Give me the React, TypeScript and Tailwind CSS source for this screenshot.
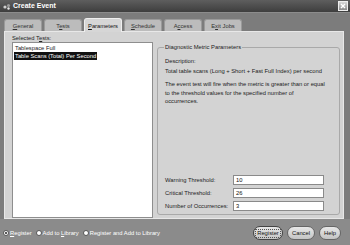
import { useState } from "react";

const tabs = [
  { label: "General", key: "G" },
  { label: "Tests", key: "e" },
  { label: "Parameters", key: "P" },
  { label: "Schedule", key: "S" },
  { label: "Access", key: "c" },
  { label: "Exit Jobs", key: "x" },
];

// underline the mnemonic letter like a swing dialog
const Mnemonic = ({ text, k }: { text: string; k: string }) => {
  const i = text.indexOf(k);
  if (i < 0) return <>{text}</>;
  return (
    <>
      {text.slice(0, i)}
      <span className="underline">{text[i]}</span>
      {text.slice(i + 1)}
    </>
  );
};

const Field = ({ label, value }: { label: string; value: string }) => (
  <div className="flex items-center h-[10px]">
    <div className="w-[68px] text-[#222] whitespace-nowrap">{label}</div>
    <div className="w-[91px] h-[10px] bg-white border border-[#8a8a8a] px-[2px] leading-[8px] text-[#111]">
      {value}
    </div>
  </div>
);

const Radio = ({ checked, children }: { checked?: boolean; children: React.ReactNode }) => (
  <div className="flex items-center gap-[1px]">
    <div className="size-[6px] rounded-full bg-white border border-[#555] flex items-center justify-center">
      {checked && <div className="size-[2px] rounded-full bg-[#222]" />}
    </div>
    <span className="text-white">{children}</span>
  </div>
);

export default function App() {
  const [tab, setTab] = useState(2);

  return (
    <div
      className="w-[350px] h-[245px] bg-[#7c7c7c] flex flex-col overflow-hidden text-[5.8px] leading-[8px]"
      style={{ fontFamily: '"Liberation Sans", Arial, sans-serif' }}
    >
      {/* Title bar */}
      <div className="h-[13px] bg-gradient-to-b from-[#5e5e5e] to-[#3e3e3e] border-b border-[#8c8c8c] flex items-center pl-[3px] pr-[2px]">
        <svg width="8" height="7" viewBox="0 0 8 7" className="mr-[2px]">
          <circle cx="2" cy="4" r="1.6" fill="#cfcfcf" />
          <circle cx="5.5" cy="2.5" r="1.6" fill="#9a9a9a" />
          <circle cx="5.5" cy="5.5" r="1.2" fill="#e5e5e5" />
        </svg>
        <span className="text-white font-bold text-[7px]">Create Event</span>
        <div className="ml-auto size-[10px] bg-gradient-to-b from-[#d8d8d8] to-[#8a8a8a] border border-[#eee] flex items-center justify-center">
          <svg width="6" height="6" viewBox="0 0 6 6">
            <path d="M1 1 L5 5 M5 1 L1 5" stroke="#fff" strokeWidth="1.4" />
          </svg>
        </div>
      </div>

      {/* Tabs */}
      <div className="flex items-end gap-[2px] pl-[4px] pt-[4px] h-[18px]">
        {tabs.map((t, i) => (
          <button
            key={t.label}
            onClick={() => setTab(i)}
            className={
              i === tab
                ? "w-[38px] h-[14px] bg-[#d6d6d6] border border-b-0 border-[#efefef] rounded-t-[3px] text-[#111] -mb-[1px] relative"
                : "w-[38px] h-[12px] bg-[#bcbcbc] border border-b-0 border-[#9a9a9a] rounded-t-[3px] text-[#333]"
            }
          >
            <Mnemonic text={t.label} k={t.key} />
          </button>
        ))}
      </div>

      {/* Panel */}
      <div className="ml-[4px] mr-[6px] h-[188px] bg-[#d3d3d3] border border-[#e8e8e8] flex gap-[4px] pl-[7px] pt-[2px]">
        {/* Selected tests */}
        <div className="w-[141px] flex flex-col">
          <div className="h-[8px] text-[#222]">
            Selected T<span className="underline">e</span>sts:
          </div>
          <div className="h-[176px] bg-white border border-[#8e8e8e] pt-[1px] pl-[1px]">
            <div className="text-[#222] pl-[1px]">Tablespace Full</div>
            <div className="inline-block bg-[#111] text-white px-[1px]">Table Scans (Total) Per Second</div>
          </div>
        </div>

        {/* Diagnostic params */}
        <fieldset className="mt-[9px] w-[183px] h-[172px] border border-[#a9a9a9] rounded-[3px] pl-[7px] pr-[4px] flex flex-col">
          <legend className="px-[1px] ml-[-1px] text-[#222]">Diagnostic Metric Parameters</legend>
          <div className="mt-[6px] text-[#222]">Description:</div>
          <div className="mt-[2px] text-[#222] whitespace-nowrap">Total table scans (Long + Short + Fast Full Index) per second</div>
          <div className="mt-[5px] text-[#222] leading-[8.5px] whitespace-nowrap">
            The event test will fire when the metric is greater than or equal
            <br />
            to the threshold values for the specified number of
            <br />
            occurrences.
          </div>
          <div className="mt-auto mb-[3px] flex flex-col gap-[3px]">
            <Field label="Warning Threshold:" value="10" />
            <Field label="Critical Threshold:" value="26" />
            <Field label="Number of Occurrences:" value="3" />
          </div>
        </fieldset>
      </div>

      {/* Bottom bar */}
      <div className="flex-1 bg-[#8b8b8b] flex items-center pl-[3px] pr-[9px] pt-[2px]">
        <div className="flex items-center gap-[4px]">
          <Radio checked>
            <Mnemonic text="Register" k="R" />
          </Radio>
          <Radio>
            Add to <Mnemonic text="Library" k="L" />
          </Radio>
          <Radio>Register and Add to Library</Radio>
        </div>
        <div className="ml-auto flex gap-[4px]">
          <button className="h-[14px] w-[30px] rounded-full bg-gradient-to-b from-[#e8e8e8] to-[#c4c4c4] border border-[#444] text-[#111] flex items-center justify-center">
            <span className="border border-dotted border-[#555] px-[1px] leading-[7px]">Register</span>
          </button>
          <button className="h-[14px] w-[28px] rounded-full bg-gradient-to-b from-[#e8e8e8] to-[#c4c4c4] border border-[#666] text-[#111]">
            Cancel
          </button>
          <button className="h-[14px] w-[22px] rounded-full bg-gradient-to-b from-[#e8e8e8] to-[#c4c4c4] border border-[#666] text-[#111]">
            Help
          </button>
        </div>
      </div>
    </div>
  );
}
